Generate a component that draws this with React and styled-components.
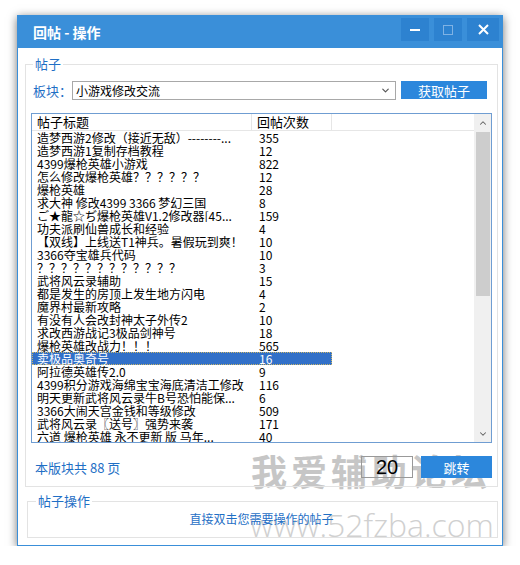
import styled, { createGlobalStyle } from 'styled-components';
import { ChevronDown, ChevronUp } from 'lucide-react';

const GlobalStyle = createGlobalStyle`
  body {
    margin: 0;
    background: #fff;
    font-family: "Noto Sans CJK SC", sans-serif;
  }
`;

const Page = styled.div`
  padding: 15px 0 0 17px;
`;

const Window = styled.div`
  position: relative;
  width: 486px;
  box-sizing: border-box;
  border: 1px solid #3a8fd9;
  background: #fff;
  box-shadow: 0 2px 9px rgba(0, 0, 0, 0.55);
  display: flex;
  flex-direction: column;
`;

const TitleBar = styled.div`
  height: 32px;
  background: #3a8fd9;
  display: flex;
  align-items: center;
  padding: 0 3px 0 15px;
`;

const Title = styled.div`
  flex: 1;
  color: #fff;
  font-weight: bold;
  font-size: 14px;
`;

const Controls = styled.div`
  display: flex;
  gap: 5px;
  align-self: flex-start;
  margin-top: 2px;
`;

const CtrlButton = styled.div`
  width: ${p => p.$w}px;
  height: 23px;
  background: #2d82d0;
  display: flex;
  align-items: center;
  justify-content: center;
`;

const Body = styled.div`
  position: relative;
  z-index: 1;
  display: flex;
  flex-direction: column;
  padding: 0 4px 7px 7px;
`;

const Group = styled.fieldset`
  margin: ${p => p.$top}px 0 0 ${p => p.$indent}px;
  padding: ${p => p.$pad};
  border: 1px solid #e3e3e3;
  min-inline-size: 0;
  display: flex;
  flex-direction: column;
`;

const Legend = styled.legend`
  margin-left: ${p => p.$shift || 0}px;
  padding: 0 2px;
  font-size: 13px;
  line-height: 14px;
  color: #1f6fc5;
`;

const FieldRow = styled.div`
  display: flex;
  align-items: flex-start;
  margin: 0 5px 0 2px;
`;

const FieldLabel = styled.span`
  width: 39px;
  font-size: 13px;
  line-height: 19px;
  color: #1f6fc5;
`;

const Combo = styled.div`
  flex: 1;
  height: 19px;
  box-sizing: border-box;
  border: 1px solid #a8a8a8;
  display: flex;
  align-items: center;
  padding: 0 4px 0 3px;
  font-size: 12px;
  color: #000;
`;

const ComboText = styled.span`
  flex: 1;
`;

const BlueButton = styled.button`
  width: ${p => p.$w}px;
  height: ${p => p.$h}px;
  margin-left: ${p => p.$gap}px;
  padding: 0;
  border: 0;
  background: #2c87dc;
  color: #fff;
  font-family: inherit;
  font-size: 13px;
`;

const List = styled.div`
  margin-top: 13px;
  height: 330px;
  box-sizing: border-box;
  border: 1px solid #6f9dd2;
  background: #fff;
  display: flex;
`;

const Table = styled.div`
  flex: 1;
  overflow: hidden;
  display: flex;
  flex-direction: column;
`;

const HeaderRow = styled.div`
  display: grid;
  grid-template-columns: 220px 80px;
  height: 16px;
  flex-shrink: 0;
  border-bottom: 1px solid #e6e6e6;
`;

const HeaderCell = styled.div`
  padding-left: 5px;
  font-size: 13px;
  line-height: 16px;
  color: #000;
  border-right: 1px solid #e6e6e6;
`;

const Row = styled.div`
  display: grid;
  grid-template-columns: 220px 80px;
  width: 300px;
  height: 13px;
  flex-shrink: 0;
  box-sizing: border-box;
  background: ${p => (p.$selected ? '#3170c8' : 'transparent')};
  color: ${p => (p.$selected ? '#fff' : '#000')};
  outline: ${p => (p.$selected ? '1px dotted #c9b56a' : 'none')};
  outline-offset: -1px;
`;

const Cell = styled.div`
  padding-left: ${p => p.$pad}px;
  font-size: 12px;
  line-height: 13px;
  white-space: nowrap;
  overflow: hidden;
`;

const ScrollBar = styled.div`
  width: 17px;
  background: #f0f0f0;
  display: flex;
  flex-direction: column;
`;

const ScrollArrow = styled.div`
  height: 17px;
  display: flex;
  align-items: center;
  justify-content: center;
  color: #606060;
  margin-top: ${p => (p.$bottom ? 'auto' : '0')};
`;

const Thumb = styled.div`
  height: 164px;
  margin: 1px 1px 0 2px;
  background: #cdcdcd;
`;

const FooterRow = styled.div`
  display: flex;
  align-items: center;
  margin-top: 13px;
  height: 22px;
`;

const PageInfo = styled.span`
  flex: 1;
  margin-left: 4px;
  font-size: 13px;
  color: #1f6fc5;
`;

const PageInput = styled.div`
  width: 52px;
  height: 22px;
  box-sizing: border-box;
  border: 1px solid #999;
  background: transparent;
  font-family: "Liberation Sans", sans-serif;
  font-size: 20px;
  line-height: 20px;
  text-align: center;
  color: #000;
`;

const Hint = styled.div`
  font-size: 12px;
  line-height: 14px;
  text-align: center;
  color: #1f6fc5;
`;

const WatermarkCn = styled.div`
  position: absolute;
  z-index: 0;
  left: 233px;
  top: 436px;
  font-size: 36px;
  line-height: 36px;
  font-weight: bold;
  letter-spacing: 4px;
  color: #c6c6c6;
  white-space: nowrap;
`;

const WatermarkUrl = styled.div`
  position: absolute;
  z-index: 0;
  left: 232px;
  top: 493px;
  font-family: "Open Sans", sans-serif;
  font-weight: 300;
  font-size: 32px;
  line-height: 32px;
  color: #d0d0d0;
  white-space: nowrap;
`;

const posts = [
  ['造梦西游2修改（接近无敌）--------...', '355'],
  ['造梦西游1复制存档教程', '12'],
  ['4399爆枪英雄小游戏', '822'],
  ['怎么修改爆枪英雄？？？？？？', '12'],
  ['爆枪英雄', '28'],
  ['求大神 修改4399  3366 梦幻三国', '8'],
  ['ご★龍☆ぢ爆枪英雄V1.2修改器[45...', '159'],
  ['功夫派刷仙兽成长和经验', '4'],
  ['【双线】上线送T1神兵。暑假玩到爽！', '10'],
  ['3366夺宝雄兵代码', '10'],
  ['？？？？？？？？？？？？', '3'],
  ['武将风云录辅助', '15'],
  ['都是发生的房顶上发生地方闪电', '4'],
  ['魔界村最新攻略', '2'],
  ['有没有人会改封神太子外传2', '10'],
  ['求改西游战记3极品剑神号', '18'],
  ['爆枪英雄改战力！！！', '565'],
  ['卖极品奥奇号', '16'],
  ['阿拉德英雄传2.0', '9'],
  ['4399积分游戏海绵宝宝海底清洁工修改', '116'],
  ['明天更新武将风云录牛B号恐怕能保...', '6'],
  ['3366大闹天宫金钱和等级修改', '509'],
  ['武将风云录〖送号〗强势来袭', '171'],
  ['六道 爆枪英雄 永不更新 版   马年...', '40'],
];

function App() {
  return (
    <Page>
      <GlobalStyle />
      <Window>
        <TitleBar>
          <Title>回帖 - 操作</Title>
          <Controls>
            <CtrlButton $w={28}>
              <svg width="10" height="10" viewBox="0 0 10 10">
                <rect x="0" y="4" width="10" height="2" fill="#fff" />
              </svg>
            </CtrlButton>
            <CtrlButton $w={28}>
              <svg width="10" height="10" viewBox="0 0 10 10">
                <rect x="0.5" y="0.5" width="9" height="9" fill="none" stroke="#7fb2e4" />
              </svg>
            </CtrlButton>
            <CtrlButton $w={32}>
              <svg width="11" height="11" viewBox="0 0 11 11">
                <path d="M1 1 L10 10 M10 1 L1 10" stroke="#fff" strokeWidth="2" />
              </svg>
            </CtrlButton>
          </Controls>
        </TitleBar>

        <WatermarkCn>我爱辅助论坛</WatermarkCn>
        <WatermarkUrl>www.52fzba.com</WatermarkUrl>

        <Body>
          <Group $top={9} $indent={0} $pad="10px 5px 8px 5px">
            <Legend $shift={2}>帖子</Legend>
            <FieldRow>
              <FieldLabel>板块：</FieldLabel>
              <Combo>
                <ComboText>小游戏修改交流</ComboText>
                <ChevronDown size={11} strokeWidth={2.5} color="#555" />
              </Combo>
              <BlueButton $w={86} $h={18} $gap={5}>获取帖子</BlueButton>
            </FieldRow>

            <List>
              <Table>
                <HeaderRow>
                  <HeaderCell>帖子标题</HeaderCell>
                  <HeaderCell>回帖次数</HeaderCell>
                </HeaderRow>
                {posts.map(([title, count], i) => (
                  <Row key={i} $selected={i === 17}>
                    <Cell $pad={5}>{title}</Cell>
                    <Cell $pad={7}>{count}</Cell>
                  </Row>
                ))}
              </Table>
              <ScrollBar>
                <ScrollArrow>
                  <ChevronUp size={10} strokeWidth={2.5} />
                </ScrollArrow>
                <Thumb />
                <ScrollArrow $bottom>
                  <ChevronDown size={10} strokeWidth={2.5} />
                </ScrollArrow>
              </ScrollBar>
            </List>

            <FooterRow>
              <PageInfo>本版块共 88 页</PageInfo>
              <PageInput>20</PageInput>
              <BlueButton $w={71} $h={22} $gap={8}>跳转</BlueButton>
            </FooterRow>
          </Group>

          <Group $top={7} $indent={2} $pad="4px 10px 11px 8px">
            <Legend>帖子操作</Legend>
            <Hint>直接双击您需要操作的帖子</Hint>
          </Group>
        </Body>
      </Window>
    </Page>
  );
}

export default App;
